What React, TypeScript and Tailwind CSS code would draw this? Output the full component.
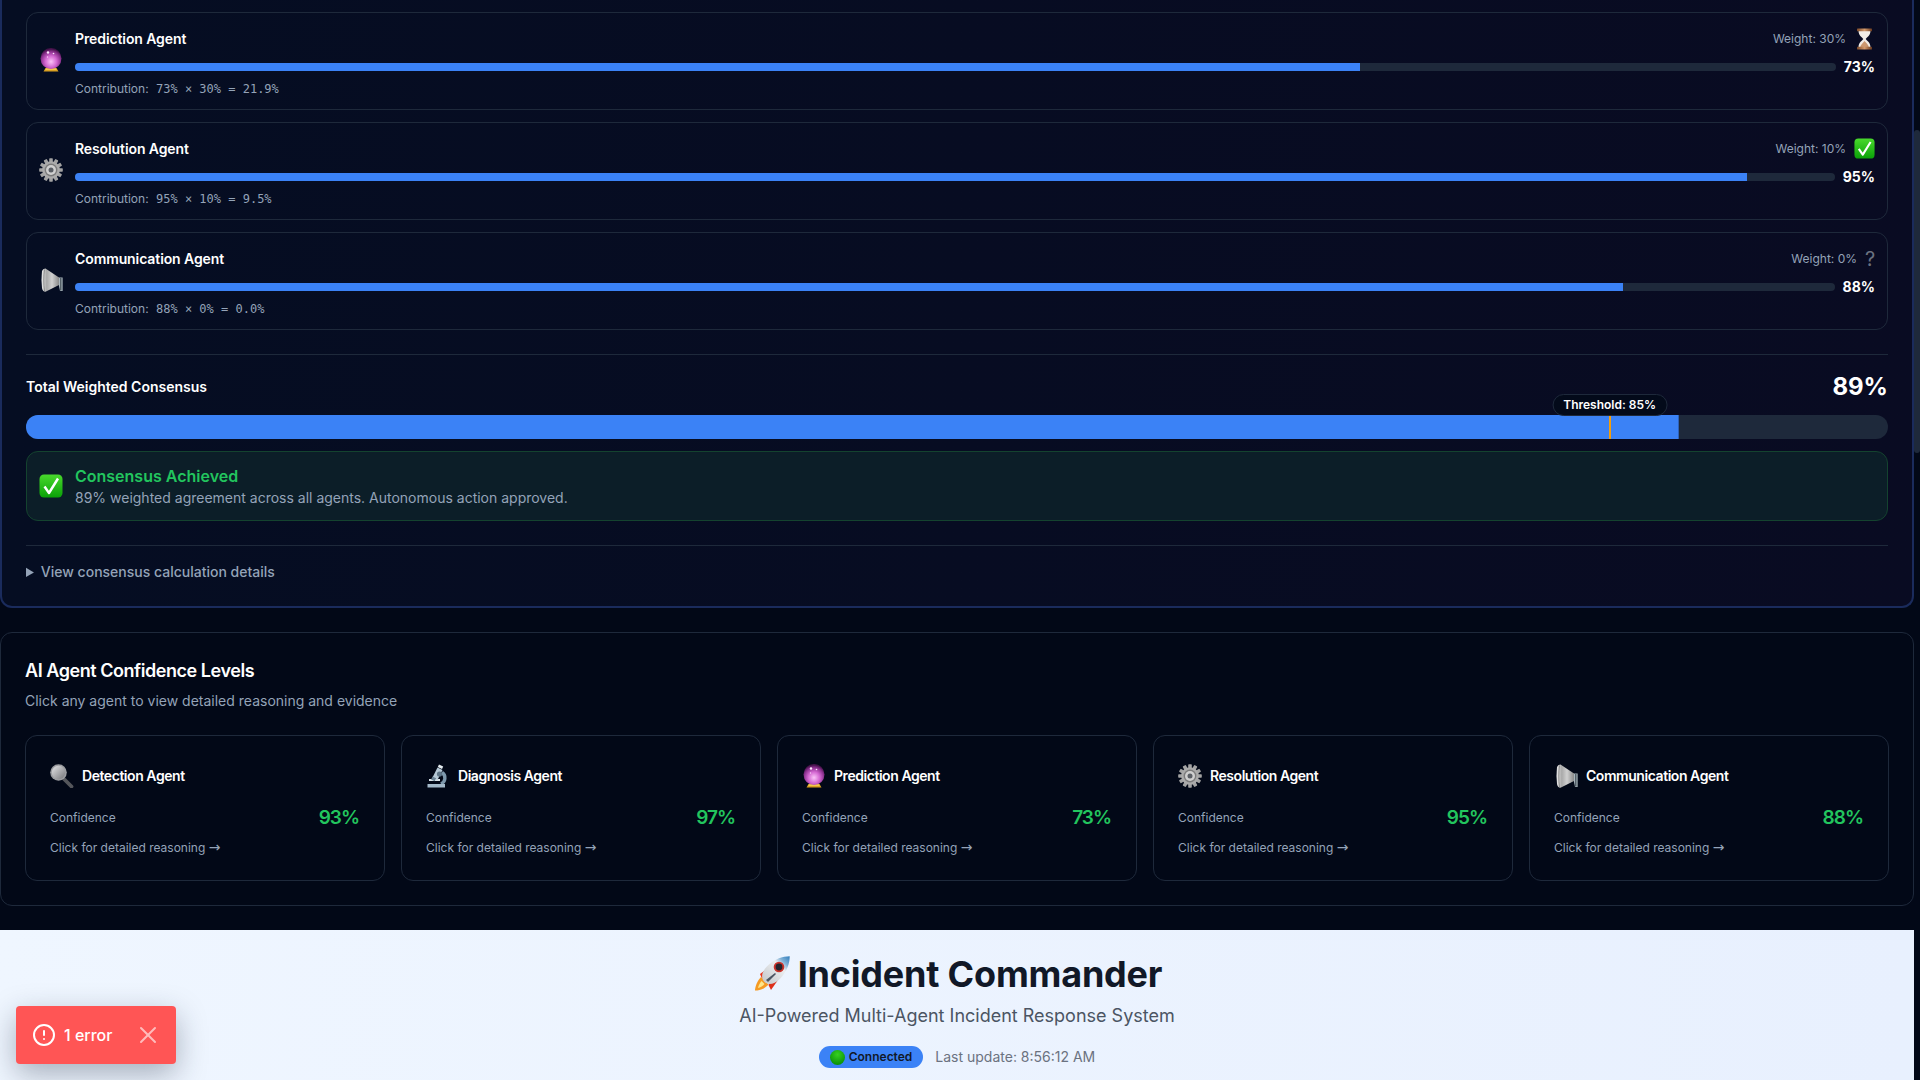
import React from "react";
import { CircleAlert, X } from "lucide-react";

function Ball({ s = 24 }: { s?: number }) {
  return (
    <svg width={s} height={s} viewBox="0 0 24 24" className="shrink-0">
      <defs>
        <radialGradient id="ballg" cx="50%" cy="65%" r="60%">
          <stop offset="0%" stopColor="#fbc4f8" />
          <stop offset="45%" stopColor="#d468d2" />
          <stop offset="80%" stopColor="#8a2f8d" />
          <stop offset="100%" stopColor="#45124a" />
        </radialGradient>
      </defs>
      <path d="M6.500 20h11l2 3.600h-15z" fill="#d9a021" />
      <path d="M7 20.400h10l.8 1.400H6.200z" fill="#f7d560" />
      <circle cx="12" cy="10.500" r="10.500" fill="url(#ballg)" />
      <circle cx="9" cy="4.500" r="1.200" fill="#fde8fb" />
      <circle cx="14.500" cy="5.500" r=".8" fill="#fde8fb" />
      <circle cx="8.500" cy="9" r=".7" fill="#f6d0f5" />
    </svg>
  );
}

function Gear({ s = 24 }: { s?: number }) {
  const teeth = [0, 30, 60, 90, 120, 150, 180, 210, 240, 270, 300, 330];
  return (
    <svg width={s} height={s} viewBox="0 0 24 24" className="shrink-0">
      {teeth.map((a) => (
        <rect key={a} x="10.200" y="0.200" width="3.600" height="5" rx=".7" fill="#a3a3a3" transform={`rotate(${a} 12 12)`} />
      ))}
      <circle cx="12" cy="12" r="8.800" fill="#ababab" />
      <circle cx="12" cy="12" r="6.400" fill="#7b7b7b" />
      <circle cx="12" cy="12" r="5" fill="#cfcfcf" />
      <circle cx="12" cy="12" r="2.500" fill="#5a5e64" />
    </svg>
  );
}

function Mega({ s = 24 }: { s?: number }) {
  return (
    <svg width={s} height={s} viewBox="0 0 24 24" className="shrink-0">
      <defs>
        <linearGradient id="megag" x1="0" y1="0" x2="1" y2="0">
          <stop offset="0%" stopColor="#ececec" />
          <stop offset="30%" stopColor="#a9a9a9" />
          <stop offset="60%" stopColor="#d0d0d0" />
          <stop offset="100%" stopColor="#8a8a8a" />
        </linearGradient>
      </defs>
      <path d="M19 9.500h4.600v13.500H21l-1-5z" fill="#a9b6bd" />
      <path d="M21.800 10v12.600" stroke="#3e4a52" strokeWidth="1.200" />
      <path d="M3 3Q4 .3 6.500 .5L20 9.500v7.500L6.500 23.700Q3.500 23.700 3 20 2 12 3 3z" fill="url(#megag)" />
      <path d="M5.500 1.500C4.500 8 4.500 16 5.500 23" stroke="#7f7f7f" strokeWidth=".8" fill="none" />
    </svg>
  );
}

function Hourglass() {
  return (
    <svg width={21} height={22} viewBox="0 0 21 22" className="shrink-0">
      <defs>
        <linearGradient id="hgcap" x1="0" y1="0" x2="1" y2="0">
          <stop offset="0%" stopColor="#7d4a2a" />
          <stop offset="50%" stopColor="#d49a6b" />
          <stop offset="100%" stopColor="#6a3a20" />
        </linearGradient>
      </defs>
      <path d="M4.500 2.500h12C16.500 8 12.500 9.500 11.700 11 12.500 12.500 16.500 14 16.500 19.500h-12C4.500 14 8.500 12.500 9.300 11 8.500 9.500 4.500 8 4.500 2.500z" fill="#f1ece6" />
      <path d="M10.500 13c2 2 3.800 3.500 4.500 6.500H6c.8-3 2.800-4.500 4.500-6.500z" fill="#c58a5a" opacity=".85" />
      <rect x="3" y="0.500" width="15" height="2.800" rx=".6" fill="url(#hgcap)" />
      <rect x="3" y="18.700" width="15" height="2.800" rx=".6" fill="url(#hgcap)" />
    </svg>
  );
}

function Check({ s = 24, id }: { s?: number; id: string }) {
  return (
    <svg width={s} height={s} viewBox="0 0 24 24" className="shrink-0">
      <defs>
        <linearGradient id={id} x1="0" y1="0" x2="0" y2="1">
          <stop offset="0%" stopColor="#49d92c" />
          <stop offset="100%" stopColor="#0aa108" />
        </linearGradient>
      </defs>
      <rect x="0.500" y="0.500" width="23" height="23" rx="4.500" fill={`url(#${id})`} />
      <path d="M5.500 12.500 10 19 19 4.500" fill="none" stroke="#fff" strokeWidth="2.400" strokeLinejoin="round" />
    </svg>
  );
}

function Magnifier() {
  return (
    <svg width={24} height={24} viewBox="0 0 24 24" className="shrink-0">
      <defs>
        <linearGradient id="lens" x1="0" y1="0" x2="1" y2="1">
          <stop offset="0%" stopColor="#e4e4e6" />
          <stop offset="100%" stopColor="#76777b" />
        </linearGradient>
      </defs>
      <path d="M14 15l7.500 7.500" stroke="#54565b" strokeWidth="3.800" strokeLinecap="round" />
      <circle cx="8.500" cy="8.500" r="8.300" fill="#9b9ca0" />
      <circle cx="8.500" cy="8.500" r="6.700" fill="url(#lens)" />
    </svg>
  );
}

function Microscope() {
  return (
    <svg width={24} height={24} viewBox="0 0 24 24" className="shrink-0">
      <path d="M16 8.500c4.500 3 3.500 9.500-1 11.500" stroke="#7d98ac" strokeWidth="3.400" fill="none" />
      <path d="M1.500 20h17.500v3.500H1.500z" fill="#a3b9ca" />
      <path d="M3 15h11v2H3z" fill="#dbe4ea" />
      <path d="M13 0.500l4.200 2-1.200 2.600-4.200-2z" fill="#e4ecf1" />
      <path d="M11.500 3.500l5 2.400-5 10.100-5-2.400z" fill="#b5c8d6" />
      <path d="M6.500 12.500l3.600 1.700-1.400 3-3.600-1.700z" fill="#6a8294" />
      <circle cx="13.500" cy="10" r="2.600" fill="#5f7688" />
    </svg>
  );
}

function Rocket() {
  return (
    <svg width={40} height={40} viewBox="0 0 40 40" className="shrink-0">
      <defs>
        <linearGradient id="rb" x1="0" y1="0" x2="1" y2="0">
          <stop offset="0%" stopColor="#c7cace" />
          <stop offset="62%" stopColor="#eceef0" />
          <stop offset="78%" stopColor="#7fb0d6" />
          <stop offset="100%" stopColor="#2f7dbd" />
        </linearGradient>
      </defs>
      <path d="M8 20l9-7 4 5-7 7-4-.5z" fill="#e8351e" />
      <path d="M27 18l-1 8-7 10-2.500-5 3.500-7z" fill="#dd2f1a" />
      <path d="M9 23l7.500 7.500C14 34 8 36.500 3 36.500c0-4 2.500-10 6-13.500z" fill="#f59a23" />
      <path d="M9.500 27l3 3c-1.500 2-4 3.500-6.500 4 .5-2.500 2-5.200 3.500-7z" fill="#fde68a" />
      <g transform="rotate(-45 25 15)">
        <path d="M7 15C7 10 12 6 20 6 30 6 38 10 43 15 38 20 30 24 20 24 12 24 7 20 7 15z" fill="url(#rb)" />
      </g>
      <circle cx="27" cy="13" r="5.300" fill="#c9322a" />
      <circle cx="27" cy="13" r="3.400" fill="#24242c" />
      <path d="M14 26l9-7 1 1-8 8z" fill="#4b5563" />
    </svg>
  );
}

function GreenDot() {
  return (
    <svg width={15} height={15} viewBox="0 0 15 15" className="shrink-0">
      <defs>
        <radialGradient id="gd" cx="50%" cy="30%" r="75%">
          <stop offset="0%" stopColor="#35d020" />
          <stop offset="100%" stopColor="#068a06" />
        </radialGradient>
      </defs>
      <circle cx="7.500" cy="7.500" r="7.500" fill="url(#gd)" />
    </svg>
  );
}

type Row = { name: string; icon: React.ReactNode; weight: string; status: React.ReactNode; value: number; calc: string };

const rows: Row[] = [
  { name: "Prediction Agent", icon: <Ball />, weight: "Weight: 30%", status: <Hourglass />, value: 73, calc: "73% × 30% = 21.9%" },
  { name: "Resolution Agent", icon: <Gear />, weight: "Weight: 10%", status: <span className="-mt-0.5"><Check s={21} id="chk1" /></span>, value: 95, calc: "95% × 10% = 9.5%" },
  { name: "Communication Agent", icon: <Mega />, weight: "Weight: 0%", status: <span className="w-[10px] text-right text-xl leading-7 text-[#6b7280]">?</span>, value: 88, calc: "88% × 0% = 0.0%" },
];

const agents = [
  { name: "Detection Agent", icon: <Magnifier />, value: "93%" },
  { name: "Diagnosis Agent", icon: <Microscope />, value: "97%" },
  { name: "Prediction Agent", icon: <Ball />, value: "73%" },
  { name: "Resolution Agent", icon: <Gear />, value: "95%" },
  { name: "Communication Agent", icon: <Mega />, value: "88%" },
];

export default function App() {
  return (
    <div className="relative h-screen w-full overflow-hidden bg-[#020817] font-['Inter',sans-serif]">
      <div className="flex h-full w-[1914px] flex-col">
        <section className="rounded-b-xl border-x-2 border-b-2 border-[#1a2b5c] bg-linear-to-r from-[#050d22] to-[#090b22] px-6 pt-3 pb-6">
          <div className="flex flex-col gap-3">
            {rows.map((r) => (
              <div key={r.name} className="flex items-center gap-3 rounded-xl border border-[#1e293b] p-3">
                <div className="-mt-0.5 shrink-0">{r.icon}</div>
                <div className="min-w-0 flex-1">
                  <div className="flex h-7 items-center justify-between">
                    <span className="text-sm font-semibold tracking-[-0.1px] text-white">{r.name}</span>
                    <span className="flex items-center gap-2">
                      <span className="text-xs text-[#94a3b8]">{r.weight}</span>
                      {r.status}
                    </span>
                  </div>
                  <div className="mt-1 flex items-center gap-2">
                    <div className="h-2 flex-1 overflow-hidden rounded-full bg-[#1e293b]">
                      <div className="h-full bg-[#3b82f6]" style={{ width: `${r.value}%` }} />
                    </div>
                    <span className="text-sm font-bold text-white">{r.value}%</span>
                  </div>
                  <div className="mt-1 h-4 text-xs leading-4 text-[#94a3b8]">
                    Contribution: <span className="ml-1 font-['DejaVu_Sans_Mono',monospace] text-xs">{r.calc}</span>
                  </div>
                </div>
              </div>
            ))}
          </div>

          <div className="mt-6 border-t border-[#1e293b] pt-4">
            <div className="flex h-8 items-center justify-between">
              <span className="text-sm font-semibold text-white">Total Weighted Consensus</span>
              <span className="text-2xl font-bold text-white">89%</span>
            </div>
            <div className="relative mt-3 h-6 rounded-full bg-[#1e293b]">
              <div className="h-full w-[88.8%] rounded-l-full border-r border-[#2f62b8] bg-[#3b82f6]" />
              <div className="absolute top-0 left-[85%] h-full w-0.5 bg-[#f59e0b]" />
              <div className="absolute -top-[21px] left-[85%] ml-px flex h-[22px] -translate-x-1/2 items-center rounded-full border border-[#1e293b] bg-[#030a1a] px-2.5 text-xs font-semibold whitespace-nowrap text-white">
                Threshold: 85%
              </div>
            </div>
            <div className="mt-3 flex items-center gap-3 rounded-xl border border-[#14432f] bg-[#0c1e28] p-3">
              <Check id="chk2" />
              <div>
                <div className="text-base font-semibold text-[#22c55e]">Consensus Achieved</div>
                <div className="text-sm text-[#94a3b8]">89% weighted agreement across all agents. Autonomous action approved.</div>
              </div>
            </div>
          </div>

          <details className="mt-6 border-t border-[#1e293b] pt-4">
            <summary className="text-sm font-medium text-[#94a3b8]">View consensus calculation details</summary>
          </details>
        </section>

        <section className="mt-6 rounded-xl border border-[#1e293b] bg-[#020817] p-6">
          <h2 className="text-lg font-semibold tracking-tight text-white">AI Agent Confidence Levels</h2>
          <p className="mt-1.5 text-sm text-[#94a3b8]">Click any agent to view detailed reasoning and evidence</p>
          <div className="mt-6 grid grid-cols-5 gap-4">
            {agents.map((a) => (
              <div key={a.name} className="rounded-xl border border-[#1e293b] p-6">
                <div className="mb-3 flex h-8 items-center gap-2">
                  {a.icon}
                  <span className="text-sm font-semibold tracking-[-0.45px] text-white">{a.name}</span>
                </div>
                <div className="flex h-7 items-center justify-between">
                  <span className="text-xs text-[#94a3b8]">Confidence</span>
                  <span className="pr-px text-[19px] font-semibold tracking-[-1px] text-[#22c55e]">{a.value}</span>
                </div>
                <div className="mt-2 h-4 text-xs leading-4 text-[#94a3b8]">
                  Click for detailed reasoning <span className="font-['DejaVu_Sans',sans-serif] text-sm leading-none">→</span>
                </div>
              </div>
            ))}
          </div>
        </section>

        <header className="mt-6 flex-1 bg-linear-to-r from-[#eff6ff] to-[#e8f0fe] pt-6 text-center">
          <h1 className="flex items-center justify-center gap-1.5 text-4xl font-bold tracking-[-0.2px] text-[#111827]">
            <Rocket />
            Incident Commander
          </h1>
          <p className="mt-2 text-lg text-[#4b5563]">AI-Powered Multi-Agent Incident Response System</p>
          <div className="mt-4 flex items-center justify-center gap-3">
            <span className="flex h-[22px] items-center gap-1 rounded-full bg-[#3b82f6] px-[11px] text-xs font-semibold text-[#111827]">
              <GreenDot />
              Connected
            </span>
            <span className="text-sm text-[#6b7280]">Last update: 8:56:12 AM</span>
          </div>
        </header>
      </div>

      <div className="absolute top-[130px] right-0 h-[323px] w-1.5 rounded-full bg-[#1e293b]" />

      <div className="absolute bottom-4 left-4 flex h-[58px] w-40 items-center rounded bg-[#ff5555] pl-4 text-white shadow-[0_10px_30px_rgba(30,41,59,0.35)]">
        <CircleAlert size={24} strokeWidth={2} />
        <span className="ml-2 text-base font-medium">1 error</span>
        <X size={28} strokeWidth={1.7} className="ml-[22px] opacity-60" />
      </div>
    </div>
  );
}
